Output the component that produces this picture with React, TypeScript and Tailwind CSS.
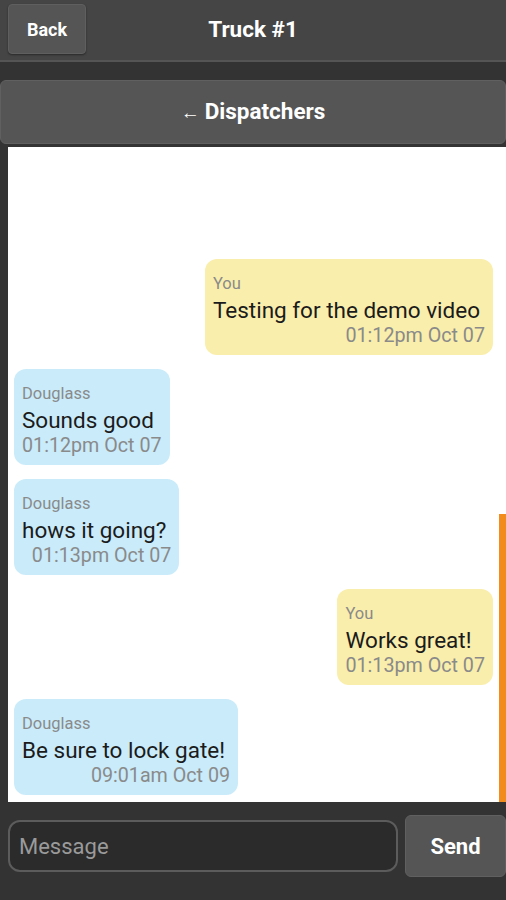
import {Fragment} from 'react';

type Msg = {from: string; text: string; time: string; mine: boolean};

const messages: Msg[] = [
    {from: 'You', text: 'Testing for the demo video', time: '01:12pm Oct 07', mine: true},
    {from: 'Douglass', text: 'Sounds good', time: '01:12pm Oct 07', mine: false},
    {from: 'Douglass', text: 'hows it going?', time: '01:13pm Oct 07', mine: false},
    {from: 'You', text: 'Works great!', time: '01:13pm Oct 07', mine: true},
    {from: 'Douglass', text: 'Be sure to lock gate!', time: '09:01am Oct 09', mine: false},
];

function Bubble({msg}: {msg: Msg}) {
    return (
        <div className={msg.mine ? 'flex justify-end pr-[13px]' : 'flex justify-start pl-[6px]'}>
            <div
                className={
                    (msg.mine ? 'bg-[#f9eeab]' : 'bg-[#c9ebfa]') +
                    ' rounded-[12px] px-2 pt-[12px] pb-[6px] flex flex-col'
                }
            >
                <span className="text-[16.5px] leading-[26px] text-[#8a8a8a]">{msg.from}</span>
                <span className="text-[22.5px] leading-[26px] text-[#1b1b1b] pr-[5px]">{msg.text}</span>
                <span className="text-[19.7px] leading-[26px] text-[#8a8a8a] text-right">{msg.time}</span>
            </div>
        </div>
    );
}

export default function App() {
    return (
        <div className="w-[506px] h-[900px] bg-[#333333] flex flex-col font-['Roboto',sans-serif] overflow-hidden">
            {/* Barra superior */}
            <div className="h-[62px] bg-[#454545] border-b-2 border-[#555555] flex items-center relative">
                <button className="ml-2 mb-[2px] w-[78px] h-[50px] rounded-[4px] bg-[#555555] border border-[#5f5f5f] shadow-[0_1px_2px_rgba(0,0,0,0.4)] text-white font-bold text-[18px]">
                    Back
                </button>
                <div className="absolute left-0 right-0 text-center text-white font-bold text-[22.5px] pointer-events-none">
                    Truck #1
                </div>
            </div>

            <div className="h-[18px]"/>

            <button className="h-[64px] rounded-[6px] bg-[#555555] border border-[#606060] text-white font-bold text-[22.5px] flex items-center justify-center gap-[5px]">
                <span className="text-[19px] mt-[3px]">←</span>
                <span>Dispatchers</span>
            </button>

            {/* Conversa */}
            <div className="mt-[3px] ml-2 h-[655px] bg-white relative flex flex-col justify-end gap-[14px] pb-[7px]">
                {messages.map((m, i) => (
                    <Fragment key={i}>
                        <Bubble msg={m}/>
                    </Fragment>
                ))}
                <div className="absolute right-0 bottom-0 w-[7px] h-[288px] bg-[#f28c1c]"/>
            </div>

            {/* Campo de mensagem */}
            <div className="flex items-center gap-[7px] mt-[13px] pl-2">
                <div className="w-[390px] h-[52px] rounded-[12px] border-2 border-[#5c5c5c] bg-[#2b2b2b] flex items-center px-[9px]">
                    <span className="text-[22px] text-[#9a9a9a]">Message</span>
                </div>
                <button className="flex-1 h-[62px] rounded-[6px] bg-[#555555] border border-[#606060] text-white font-bold text-[22px]">
                    Send
                </button>
            </div>
        </div>
    );
}
